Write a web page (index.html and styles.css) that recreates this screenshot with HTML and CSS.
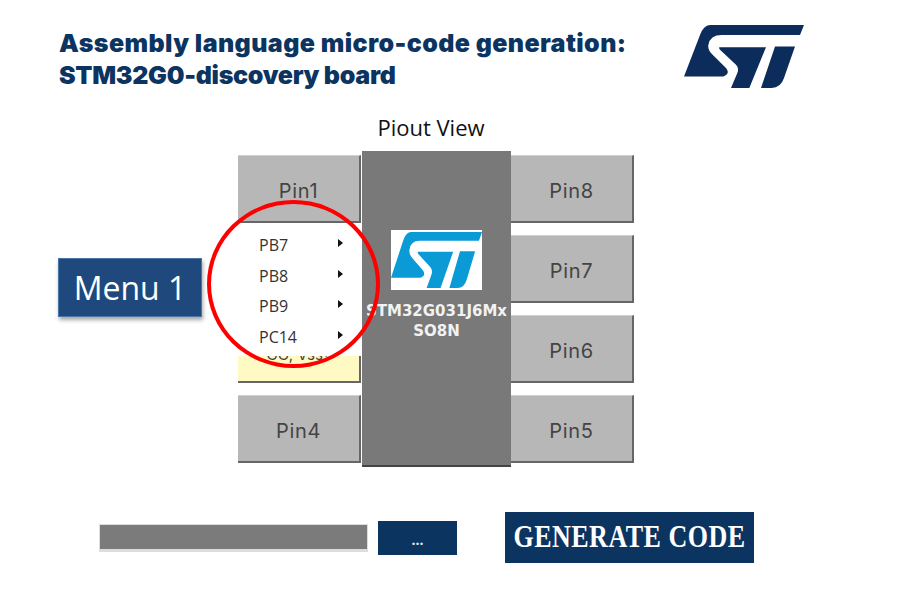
FILE: index.html
```html
<!DOCTYPE html>
<html lang="en">
<head>
  <meta charset="UTF-8">
  <title>Assembly language micro-code generation</title>
  <link rel="stylesheet" href="styles.css">
</head>
<body>
  <svg class="defs" width="0" height="0">
    <symbol id="st-logo" viewBox="72 45 360 190" preserveAspectRatio="none">
      <path d="M150 45H432L420 75H185Q150 75 145 105Q143 120 155 132L198 175Q212 192 190 200H72L120 75Q130 47 150 45Z"/>
      <path d="M178 112H318L268 235H213L232 190Q238 175 228 165L180 120Q176 114 178 112Z"/>
      <path d="M345 110H405L372 205Q362 235 335 235H303Z"/>
    </symbol>
  </svg>

  <div class="slide">
    <div class="header">
      <h1 class="title">Assembly language micro-code generation:<br><span class="title-sub">STM32G0-discovery board</span></h1>
      <svg class="logo"><use href="#st-logo"/></svg>
    </div>

    <div class="view-title">Piout View</div>

    <div class="diagram">
      <div class="menu-btn">Menu 1</div>

      <div class="pinout">
        <div class="pin">Pin1</div>
        <div class="chip">
          <div class="chip-logo"><svg><use href="#st-logo"/></svg></div>
          <div class="chip-name">STM32G031J6Mx<br>SO8N</div>
        </div>
        <div class="pin">Pin8</div>
        <div class="pin"></div>
        <div class="pin">Pin7</div>
        <div class="pin pin-active"><span>GG, Vss?</span></div>
        <div class="pin">Pin6</div>
        <div class="pin">Pin4</div>
        <div class="pin">Pin5</div>

        <ul class="menu">
          <li>PB7</li>
          <li>PB8</li>
          <li>PB9</li>
          <li>PC14</li>
        </ul>
        <div class="circle"></div>
      </div>
    </div>

    <div class="footer">
      <div class="path-box"></div>
      <div class="browse">...</div>
      <div class="generate"><span>Generate code</span></div>
    </div>
  </div>
</body>
</html>
```

FILE: styles.css
```css
body { margin: 0; background: #fff; font-family: "Open Sans", sans-serif; }
.defs { position: absolute; }
.slide { width: 921px; height: 601px; overflow: hidden; }

.header { display: flex; align-items: flex-start; padding: 25px 0 0 59px; height: 73px; }
.title { margin: 2px 0 0; width: 625px; font-family: Inter, sans-serif; font-size: 25px; line-height: 32px; font-weight: 900; letter-spacing: 0.4px; color: #0c3460; white-space: nowrap; }
.title-sub { letter-spacing: -0.3px; }
.logo { width: 120px; height: 63px; fill: #0c2d5c; }

.view-title { margin-top: 14px; text-align: center; font-size: 22px; line-height: 30px; width: 862px; color: #111; }

.diagram { display: flex; align-items: flex-start; margin-top: 13px; padding-left: 58px; }
.menu-btn { width: 144px; height: 59px; margin: 103px 36px 0 0; background: #1f497d; border: 1px solid #4a76a8; box-sizing: border-box; box-shadow: 1px 3px 4px rgba(0,0,0,0.35); color: #fff; font-size: 32px; line-height: 57px; text-align: center; }

.pinout { position: relative; display: grid; grid-template-columns: 123px 150px 123px; grid-auto-rows: 68px; row-gap: 12px; }
.pin { display: flex; align-items: center; justify-content: center; padding-top: 4px; background: #b7b7b7; border-bottom: 2px solid #666; border-right: 2px solid #666; border-top: 1px solid #d0d0d0; box-sizing: border-box; font-family: Inter, sans-serif; font-size: 20px; letter-spacing: 0.7px; color: #444; }
.pin-active { background: #fff9c4; font-size: 15px; letter-spacing: 0; align-items: flex-end; }
.pin-active span { padding-bottom: 17px; }

.chip { grid-row: 1 / span 4; grid-column: 2; margin: -4px 0 -4px 1px; padding-top: 78px; background: #797979; border-bottom: 2px solid #444; box-sizing: border-box; color: #fff; text-align: center; }
.chip-logo { width: 91px; height: 60px; margin: 1px auto 11px; padding: 2px 0; background: #fff; box-sizing: border-box; }
.chip-logo svg { display: block; width: 100%; height: 100%; fill: #0a9ad6; }
.chip-name { font-family: "DejaVu Sans", sans-serif; font-weight: bold; font-size: 15px; line-height: 20px; color: #f2f2f2; white-space: nowrap; }

.menu { position: absolute; left: -20px; top: 69px; width: 143px; height: 132px; margin: 0; padding: 6px 0 0; list-style: none; background: #fff; box-sizing: border-box; }
.menu li { position: relative; height: 30.7px; line-height: 30px; padding-left: 41px; font-size: 16px; color: #333; }
.menu li::after { content: ""; position: absolute; left: 120px; top: 9px; border-left: 5px solid #111; border-top: 4px solid transparent; border-bottom: 4px solid transparent; }
.circle { position: absolute; left: -31px; top: 45px; width: 173px; height: 168px; border: 4px solid #f00; border-radius: 50%; box-sizing: border-box; }

.footer { display: flex; align-items: center; margin-top: 49px; padding-left: 99px; }
.path-box { width: 269px; height: 28px; background: #7b7b7b; border: 1px solid #ddd; border-bottom-width: 3px; box-sizing: border-box; }
.browse { width: 79px; height: 34px; margin-left: 10px; background: #0c3460; color: #e8e8e8; font-size: 14px; font-weight: bold; line-height: 38px; text-align: center; }
.generate { width: 249px; height: 51px; margin-left: 48px; background: #0c3460; color: #fff; font-family: "Liberation Serif", serif; font-weight: bold; font-size: 26px; line-height: 50px; letter-spacing: 0.5px; text-align: center; text-transform: uppercase; white-space: nowrap; }
.generate span { display: inline-block; transform: scaleY(1.25); }
```
